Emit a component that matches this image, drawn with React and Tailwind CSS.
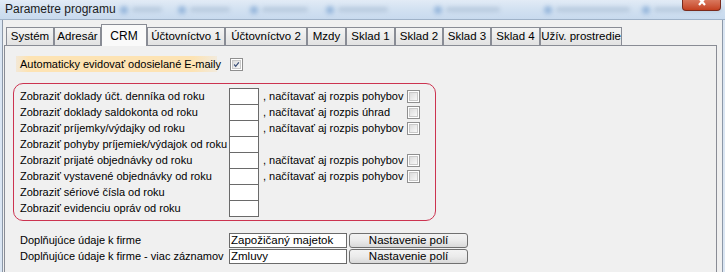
import { Fragment } from 'react'

const tabs = [
  { label: 'Systém', w: 'w-[48px]' },
  { label: 'Adresár', w: 'w-[47px]' },
  { label: 'CRM', w: 'w-[46px]', active: true },
  { label: 'Účtovníctvo 1', w: 'w-[78px]' },
  { label: 'Účtovníctvo 2', w: 'w-[82px]' },
  { label: 'Mzdy', w: 'w-[39px]' },
  { label: 'Sklad 1', w: 'w-[49px]' },
  { label: 'Sklad 2', w: 'w-[48px]' },
  { label: 'Sklad 3', w: 'w-[48px]' },
  { label: 'Sklad 4', w: 'w-[49px]' },
  { label: 'Užív. prostredie', w: 'w-[82px]' },
]

const rows = [
  { label: 'Zobraziť doklady účt. denníka od roku', extra: ', načítavať aj rozpis pohybov' },
  { label: 'Zobraziť doklady saldokonta od roku', extra: ', načítavať aj rozpis úhrad' },
  { label: 'Zobraziť príjemky/výdajky od roku', extra: ', načítavať aj rozpis pohybov' },
  { label: 'Zobraziť pohyby príjemiek/výdajok od roku' },
  { label: 'Zobraziť prijaté objednávky od roku', extra: ', načítavať aj rozpis pohybov' },
  { label: 'Zobraziť vystavené objednávky od roku', extra: ', načítavať aj rozpis pohybov' },
  { label: 'Zobraziť sériové čísla od roku' },
  { label: 'Zobraziť evidenciu opráv od roku' },
]

// blurred taskbar-ish items behind the aero title bar
const blobs = [
  { x: 'w-[30px]', gap: 'ml-[120px]' },
  { x: 'w-[40px]', gap: 'ml-[16px]' },
  { x: 'w-[46px]', gap: 'ml-[20px]' },
  { x: 'w-[50px]', gap: 'ml-[18px]' },
  { x: 'w-[54px]', gap: 'ml-[46px]' },
  { x: 'w-[74px]', gap: 'ml-[44px]' },
  { x: 'w-[68px]', gap: 'ml-[12px]' },
]

function CheckBox({ checked }) {
  return (
    <div className="w-[13px] h-[13px] border border-[#8f8f8f] bg-white p-[1px]">
      <div className="w-full h-full border border-[#c9c9c9] bg-gradient-to-br from-[#dcdcdc] to-[#f8f8f8] flex items-center justify-center">
        {checked && (
          <svg width="9" height="9" viewBox="0 0 9 9">
            <path d="M1.5 4.5 L3.5 6.8 L7.5 1.8" stroke="#3b4f77" strokeWidth="1.6" fill="none" />
          </svg>
        )}
      </div>
    </div>
  )
}

function Button({ children }) {
  return (
    <div className="w-[119px] h-[15px] rounded-[3px] border border-[#707070] bg-gradient-to-b from-[#f3f3f3] via-[#ebebeb] to-[#d9d9d9] flex items-center justify-center text-[11.5px] leading-none text-black">
      {children}
    </div>
  )
}

export default function App() {
  return (
    <div className="w-[725px] h-[272px] overflow-hidden bg-[#dbe6f3] font-['Liberation_Sans',Arial,sans-serif] text-black flex flex-col">
      {/* title bar */}
      <div className="h-[20px] shrink-0 relative bg-gradient-to-b from-[#e2ebf6] via-[#d2e1f1] to-[#c8daee] border-b border-[#9fb2c8] flex items-center">
        <div className="absolute inset-0 flex items-center blur-[2px] opacity-50">
          {blobs.map((b, i) => (
            <Fragment key={i}>
              <div className={`${b.gap} w-[8px] h-[8px] rounded-sm bg-[#5f8fc7]`} />
              <div className={`ml-[4px] ${b.x} h-[5px] rounded bg-[#9fb4cc]`} />
            </Fragment>
          ))}
        </div>
        <span className="relative ml-[5px] -mt-[1px] text-[12px] text-[#1b1b1b]">Parametre programu</span>
        <div className="absolute right-[4px] top-0 w-[39px] h-[11px] rounded-b-[4px] border border-t-0 border-[#7a2a1c] bg-gradient-to-b from-[#d9785e] to-[#c4401f] flex items-start justify-center overflow-hidden">
          <svg width="12" height="8" viewBox="0 0 12 8" className="-mt-[1px]">
            <path d="M2 -2 L9 6 M10 -2 L3 6" stroke="#ffffff" strokeWidth="2.2" />
          </svg>
        </div>
      </div>

      <div className="flex flex-1 min-h-0">
        <div className="w-[2px] bg-[#dbe6f3]" />
        <div className="flex-1 bg-[#f0f0f0] border-l border-r border-[#8c98a8] pt-[4px] pl-[1px]">
          {/* tabs */}
          <div className="flex items-end h-[21px] pl-[2px] relative z-10">
            {tabs.map(t =>
              t.active ? (
                <div
                  key={t.label}
                  className={`${t.w} h-[22px] -mb-px border border-b-0 border-[#898c95] bg-[#fafafa] flex items-start justify-center pt-[2px] text-[12px]`}
                >
                  {t.label}
                </div>
              ) : (
                <div
                  key={t.label}
                  className={`${t.w} h-[18px] border border-b-0 border-[#898c95] bg-gradient-to-b from-[#f4f4f4] to-[#e2e2e2] flex items-center justify-center text-[11.5px]`}
                >
                  {t.label}
                </div>
              )
            )}
          </div>

          {/* panel */}
          <div className="w-[713px] h-[240px] border border-[#898c95] bg-[#f0f0f0] pl-[8px] pt-[10px]">
            <div className="flex items-center">
              <div className="ml-[3px] w-[201px] h-[16px] flex items-center pl-[4px] text-[11px] whitespace-nowrap bg-[linear-gradient(to_right,#f3e8d6,#fde3b3_6%,#fde3b3_88%,#f2eadc)]">
                Automaticky evidovať odosielané E-maily
              </div>
              <div className="ml-[13px]">
                <CheckBox checked />
              </div>
            </div>

            <div className="mt-[11px] w-[423px] h-[138px] border border-[#cc3350] rounded-[10px] pt-[4px] pl-[6px] flex">
              <div className="w-[209px] flex flex-col">
                {rows.map(r => (
                  <div key={r.label} className="h-[16px] flex items-center text-[11px] whitespace-nowrap">
                    {r.label}
                  </div>
                ))}
              </div>
              <div className="w-[30px] border-l border-r border-b border-[#6a6a6a] flex flex-col h-[129px]">
                {rows.map(r => (
                  <div key={r.label} className="h-[16px] border-t border-[#6a6a6a] bg-white" />
                ))}
              </div>
              <div className="flex flex-col">
                {rows.map(r => (
                  <div key={r.label} className="h-[16px] flex items-center">
                    {r.extra && (
                      <>
                        <span className="ml-[4px] w-[144px] text-[11px] whitespace-nowrap">{r.extra}</span>
                        <CheckBox />
                      </>
                    )}
                  </div>
                ))}
              </div>
            </div>

            <div className="mt-[12px] ml-[7px] flex flex-col gap-[1px]">
              {[
                ['Doplňujúce údaje k firme', 'Zapožičaný majetok'],
                ['Doplňujúce údaje k firme - viac záznamov', 'Zmluvy'],
              ].map(([label, value]) => (
                <div key={label} className="h-[15px] flex items-center">
                  <span className="w-[209px] text-[11px] whitespace-nowrap">{label}</span>
                  <div className="w-[118px] h-[15px] border border-[#6a6a6a] bg-white flex items-center pl-[1px] text-[11.5px] leading-none">
                    {value}
                  </div>
                  <div className="ml-[2px]">
                    <Button>Nastavenie polí</Button>
                  </div>
                </div>
              ))}
            </div>
          </div>
        </div>
        <div className="w-[2px] bg-[#dbe6f3]" />
      </div>
    </div>
  )
}
